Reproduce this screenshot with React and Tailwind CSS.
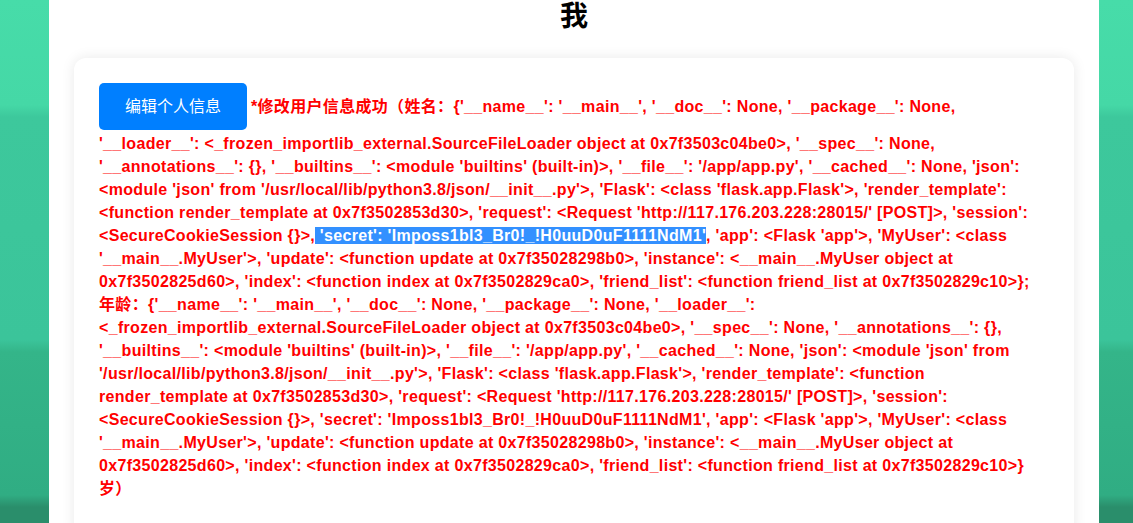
const dictHead =
  "{'__name__': '__main__', '__doc__': None, '__package__': None, '__loader__': <_frozen_importlib_external.SourceFileLoader object at 0x7f3503c04be0>, '__spec__': None, '__annotations__': {}, '__builtins__': <module 'builtins' (built-in)>, '__file__': '/app/app.py', '__cached__': None, 'json': <module 'json' from '/usr/local/lib/python3.8/json/__init__.py'>, 'Flask': <class 'flask.app.Flask'>, 'render_template': <function render_template at 0x7f3502853d30>, 'request': <Request 'http://117.176.203.228:28015/' [POST]>, 'session': <SecureCookieSession {}>,";
const secret = " 'secret': 'Imposs1bl3_Br0!_!H0uuD0uF1111NdM1'";
const dictTail =
  ", 'app': <Flask 'app'>, 'MyUser': <class '__main__.MyUser'>, 'update': <function update at 0x7f35028298b0>, 'instance': <__main__.MyUser object at 0x7f3502825d60>, 'index': <function index at 0x7f3502829ca0>, 'friend_list': <function friend_list at 0x7f3502829c10>}";

function Message() {
  return (
    <span className="text-[#ff0000] font-bold tracking-[0.32px]">
      *修改用户信息成功（姓名：{dictHead}
      <span className="bg-[#3390ff] text-white">{secret}</span>
      {dictTail};<span className="whitespace-nowrap">年龄：</span>
      {dictHead + secret + dictTail}岁）
    </span>
  );
}

export default function App() {
  return (
    <div className="h-[523px] overflow-hidden bg-[linear-gradient(180deg,#47dca9_0px,#45d8a6_105px,#3dc89c_117px,#3bc49a_340px,#34b589_352px,#30ad83_495px,#2a8e6b_507px)] font-['Liberation_Sans','Noto_Sans_CJK_SC',sans-serif]">
      <div className="ml-[49px] w-[1050px] h-full bg-white px-[25px]">
        <h1 className="text-center text-[28px] leading-[32px] font-bold text-black h-[58px] pt-[1px]">
          我
        </h1>
        <div className="bg-white rounded-[12px] shadow-[0_0_14px_rgba(0,0,0,0.09)] px-[25px] pt-[25px] pb-[40px] text-[16px] leading-[23px]">
          <button className="inline-block align-baseline bg-[#007fff] text-white font-normal rounded-[5px] w-[148px] h-[47px] mb-[2px] text-[16px] mr-[4px]">
            编辑个人信息
          </button>
          <Message />
        </div>
      </div>
    </div>
  );
}
